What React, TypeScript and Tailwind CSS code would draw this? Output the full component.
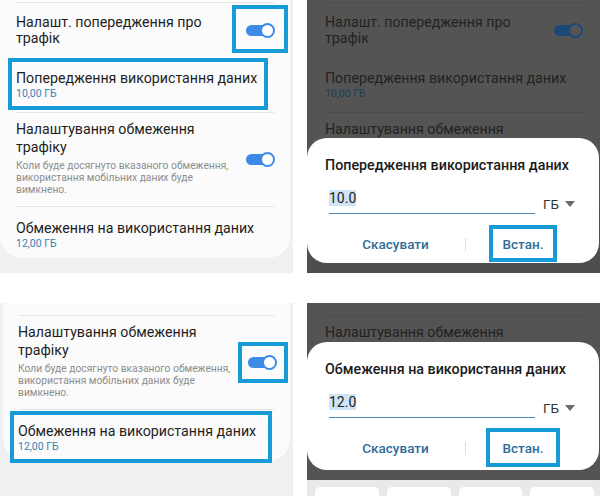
const HL = 'absolute border-[4px] border-[#169bd6]';

type Tone = {
  title: string;
  sub: string;
  desc: string;
  line: string;
};

const LIGHT: Tone = {
  title: 'text-[#1e1e1e]',
  sub: 'text-[#3a7fb6]',
  desc: 'text-[#8d8d8d]',
  line: 'border-[#e4e4e4]',
};

const DIM: Tone = {
  title: 'text-[#222222]',
  sub: 'text-[#1e3d58]',
  desc: 'text-[#383838]',
  line: 'border-[#4d4d4d]',
};

function Toggle({ dim }: { dim?: boolean }) {
  return (
    <div className="relative h-[15px] w-[29px] shrink-0">
      <div
        className={`absolute left-0 top-[2px] h-[11px] w-[24px] rounded-full ${dim ? 'bg-[#1c4a78]' : 'bg-[#3d8be6]'}`}
      />
      <div
        className={`absolute right-0 top-0 size-[15px] rounded-full border-2 ${dim ? 'border-[#1c4a78] bg-[#555555]' : 'border-[#3d8be6] bg-white'}`}
      />
    </div>
  );
}

function TrafficRow({ t, dim, px }: { t: Tone; dim?: boolean; px: string }) {
  return (
    <div className={`flex h-[54px] items-center justify-between ${px}`}>
      <div className={`text-[14.2px] leading-[16px] ${t.title}`}>
        Налашт. попередження про
        <br />
        трафік
      </div>
      <Toggle dim={dim} />
    </div>
  );
}

function WarnRow({ t, px }: { t: Tone; px: string }) {
  return (
    <div className={`flex h-[55px] flex-col justify-center ${px}`}>
      <div className={`text-[14.2px] leading-[18px] ${t.title}`}>Попередження використання даних</div>
      <div className={`text-[10.5px] leading-[14px] ${t.sub}`}>10,00 ГБ</div>
    </div>
  );
}

function LimitSettingRow({ t, dim, px }: { t: Tone; dim?: boolean; px: string }) {
  return (
    <div className={`flex h-[93px] items-center justify-between ${px}`}>
      <div className="pb-[4px] whitespace-nowrap">
        <div className={`text-[14.2px] leading-[18px] ${t.title}`}>
          Налаштування обмеження
          <br />
          трафіку
        </div>
        <div className={`mt-[4px] text-[10.3px] leading-[12px] ${t.desc}`}>
          Коли буде досягнуто вказаного обмеження,
          <br />
          використання мобільних даних буде
          <br />
          вимкнено.
        </div>
      </div>
      <Toggle dim={dim} />
    </div>
  );
}

function LimitRow({ t, px }: { t: Tone; px: string }) {
  return (
    <div className={`pb-[7px] pt-[12px] ${px}`}>
      <div className={`text-[14.2px] leading-[18px] ${t.title}`}>Обмеження на використання даних</div>
      <div className={`text-[10.5px] leading-[14px] ${t.sub}`}>12,00 ГБ</div>
    </div>
  );
}

function Divider({ t }: { t: Tone }) {
  return <div className={`mx-4 border-t ${t.line}`} />;
}

function Dialog({
  title,
  value,
  top,
  height,
  box,
}: {
  title: string;
  value: string;
  top: string;
  height: string;
  box: string;
}) {
  return (
    <div className={`absolute left-0 right-[1px] rounded-[20px] bg-white pl-[18px] pt-[17px] ${top} ${height}`}>
      <div className="text-[14.3px] font-medium leading-[20px] text-[#1b1b1b]">{title}</div>
      <div className="mt-[11px] flex items-end">
        <div className="ml-[4px] w-[206px] border-b-[1.5px] border-[#4f86ad] pb-[3px]">
          <span className="bg-[#cfe4f4] text-[14px] leading-[18px] text-[#222222]">{value}</span>
        </div>
        <div className="ml-[8px] flex items-center gap-[6px] pb-[1px] text-[13.5px] leading-[18px] text-[#333333]">
          ГБ
          <svg width="10" height="6" viewBox="0 0 10 6">
            <path d="M0 0h10L5 6z" fill="#6b6b6b" />
          </svg>
        </div>
      </div>
      <div className="mt-[10px] flex h-[40px] items-center">
        <div className="flex w-[140px] justify-center pl-[1px] text-[13.5px] font-medium text-[#2d6d98]">
          Скасувати
        </div>
        <div className="h-[13px] border-l border-[#dddddd]" />
        <div className="relative flex w-[114px] justify-center text-[13.5px] font-medium text-[#2d6d98]">
          Встан.
          <div className={`${HL} ${box}`} />
        </div>
      </div>
    </div>
  );
}

function Keyboard() {
  return (
    <div className="flex h-[16px] gap-[8px] bg-[#e9e9e9] pl-[8px] pr-[6px] pt-[7px]">
      {[0, 1, 2, 3].map((k) => (
        <div key={k} className="h-[9px] flex-1 rounded-t-[5px] bg-white" />
      ))}
    </div>
  );
}

export default function App() {
  return (
    <div className="grid h-[496px] w-[600px] grid-cols-[293px_293px] grid-rows-[273px_193px] gap-x-[14px] gap-y-[30px] overflow-hidden bg-white font-['Roboto',sans-serif]">
      {/* top left */}
      <div className="relative overflow-hidden bg-[#f0f0f0]">
        <div className="mr-[3px] rounded-b-[22px] bg-[#fbfbfb] pt-[2px]">
          <Divider t={LIGHT} />
          <TrafficRow t={LIGHT} px="pl-4 pr-[15px]" />
          <WarnRow t={LIGHT} px="pl-4" />
          <Divider t={LIGHT} />
          <LimitSettingRow t={LIGHT} px="pl-4 pr-[15px]" />
          <Divider t={LIGHT} />
          <LimitRow t={LIGHT} px="pl-4" />
        </div>
        <div className={`${HL} left-[232px] top-[5px] h-[48px] w-[56px]`} />
        <div className={`${HL} left-[8px] top-[58px] h-[52px] w-[260px]`} />
      </div>

      {/* top right */}
      <div className="relative overflow-hidden bg-[#4e4e4e]">
        <div className="bg-[#545454] pt-[2px]">
          <Divider t={DIM} />
          <TrafficRow t={DIM} dim px="pl-[18px] pr-[17px]" />
          <WarnRow t={DIM} px="pl-[18px]" />
          <div className={`ml-[18px] mr-4 border-t ${DIM.line}`} />
          <LimitSettingRow t={DIM} dim px="pl-[18px] pr-[17px]" />
        </div>
        <Dialog
          title="Попередження використання даних"
          value="10.0"
          top="top-[138px]"
          height="h-[125px]"
          box="left-[23px] top-[-9px] h-[37px] w-[68px]"
        />
      </div>

      {/* bottom left */}
      <div className="relative overflow-hidden bg-[#f0f0f0]">
        <div className="ml-[3px] mr-[3px] rounded-b-[22px] bg-[#fbfbfb] pt-[12px]">
          <Divider t={LIGHT} />
          <LimitSettingRow t={LIGHT} px="pl-[15px] pr-[13px]" />
          <Divider t={LIGHT} />
          <LimitRow t={LIGHT} px="pl-[15px]" />
        </div>
        <div className={`${HL} left-[238px] top-[39px] h-[41px] w-[50px]`} />
        <div className={`${HL} left-[10px] top-[108px] h-[52px] w-[262px]`} />
      </div>

      {/* bottom right */}
      <div className="relative flex flex-col overflow-hidden">
        <div className="h-[177px] bg-[#545454] pt-[12px]">
          <div className={`ml-[18px] mr-4 border-t ${DIM.line}`} />
          <LimitSettingRow t={DIM} dim px="pl-[18px] pr-[17px]" />
        </div>
        <Keyboard />
        <Dialog
          title="Обмеження на використання даних"
          value="12.0"
          top="top-[39px]"
          height="h-[128px]"
          box="left-[20px] top-[-10px] h-[39px] w-[74px]"
        />
      </div>
    </div>
  );
}
